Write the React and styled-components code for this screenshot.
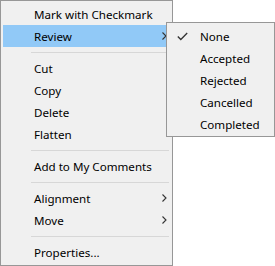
import styled, { createGlobalStyle } from "styled-components";

const GlobalStyle = createGlobalStyle`
  body {
    margin: 0;
    background: #fff;
  }
`;

const Page = styled.div`
  position: relative;
  width: 275px;
  height: 266px;
  font-family: "Noto Sans", "Open Sans", sans-serif;
  font-size: 11.6px;
  color: #000;
`;

const Menu = styled.div`
  box-sizing: border-box;
  width: ${(p) => p.$width}px;
  padding: 2px;
  background: #f0f0f0;
  border: 1px solid #979797;
  display: flex;
  flex-direction: column;
`;

const SubMenu = styled(Menu)`
  position: absolute;
  left: 166px;
  top: 22px;
  padding-bottom: 1px;
`;

const Item = styled.div`
  position: relative;
  box-sizing: border-box;
  height: 22px;
  display: flex;
  align-items: center;
  padding-left: 31px;
  padding-top: 2px;
  background: ${(p) => (p.$active ? "#91c9f7" : "transparent")};
  white-space: nowrap;
`;

const Label = styled.span`
  flex: 1;
  line-height: 20px;
`;

const Arrow = styled.svg`
  width: 5px;
  height: 8px;
  margin-right: 3px;
  margin-top: -2px;
`;

const Check = styled.svg`
  position: absolute;
  left: 8px;
  top: 7px;
  width: 11px;
  height: 9px;
`;

const Separator = styled.div`
  height: 10px;
  display: flex;
  align-items: center;
  padding-left: 28px;
  padding-right: 1px;

  &::after {
    content: "";
    flex: 1;
    height: 1px;
    background: #d7d7d7;
  }
`;

const mainItems = [
  { label: "Mark with Checkmark" },
  { label: "Review", sub: true, active: true },
  "sep",
  { label: "Cut" },
  { label: "Copy" },
  { label: "Delete" },
  { label: "Flatten" },
  "sep",
  { label: "Add to My Comments" },
  "sep",
  { label: "Alignment", sub: true },
  { label: "Move", sub: true },
  "sep",
  { label: "Properties..." },
];

const reviewItems = ["None", "Accepted", "Rejected", "Cancelled", "Completed"];

function ChevronRight() {
  return (
    <Arrow viewBox="0 0 5 8">
      <path d="M0.5 0.5 L4 4 L0.5 7.5" fill="none" stroke="#333" strokeWidth="1.1" />
    </Arrow>
  );
}

export default function App() {
  return (
    <Page>
      <GlobalStyle />
      <Menu $width={173}>
        {mainItems.map((item, i) =>
          item === "sep" ? (
            <Separator key={i} />
          ) : (
            <Item key={i} $active={item.active}>
              <Label>{item.label}</Label>
              {item.sub && <ChevronRight />}
            </Item>
          )
        )}
      </Menu>
      <SubMenu $width={109}>
        {reviewItems.map((label, i) => (
          <Item key={label}>
            {i === 0 && (
              <Check viewBox="0 0 11 9">
                <path d="M0.8 4.5 L3.8 7.5 L10.2 1" fill="none" stroke="#333" strokeWidth="1.3" />
              </Check>
            )}
            <Label>{label}</Label>
          </Item>
        ))}
      </SubMenu>
    </Page>
  );
}
